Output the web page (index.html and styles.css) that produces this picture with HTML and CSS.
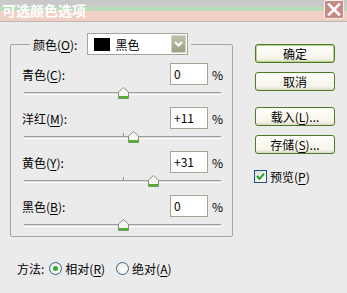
FILE: index.html
```
<!DOCTYPE html>
<html>
<head>
    <meta charset="utf-8"/>
    <title>可选颜色选项</title>
    <link rel="stylesheet" href="styles.css">
</head>
<body>

<div class="window">
    <div class="titlebar">
        <span class="title">可选颜色选项</span>
        <span class="close">
            <svg width="20" height="19" viewBox="0 0 20 19">
                <path d="M5 4.5 L15 14.5 M15 4.5 L5 14.5" stroke="#fff" stroke-width="2.6" stroke-linecap="square"/>
            </svg>
        </span>
    </div>

    <div class="content">
        <div class="left">
            <fieldset class="group">
                <legend class="legend">
                    <span class="legend-label">颜色(<u>O</u>):</span>
                    <span class="dropdown">
                        <span class="swatch"></span>
                        <span class="dropdown-text">黑色</span>
                        <span class="dropdown-btn">
                            <svg width="15" height="18" viewBox="0 0 15 18">
                                <path d="M4 7 L7.5 10.5 L11 7" fill="none" stroke="#fff" stroke-width="2"/>
                            </svg>
                        </span>
                    </span>
                </legend>

                <div class="row">
                    <span class="row-label">青色(<u>C</u>):</span>
                    <span class="field">0</span>
                    <span class="pct">%</span>
                </div>
                <div class="slider">
                    <div class="track"></div>
                    <div class="thumb" style="left: 50%">
                        <svg width="11" height="12" viewBox="0 0 11 12">
                            <path d="M0.5 11.5 V5 L5.5 0.5 L10.5 5 V11.5 Z" fill="#f6f6f0" stroke="#8a8a80"/>
                            <rect x="1" y="9" width="9" height="2.5" fill="#4eb02e"/>
                        </svg>
                    </div>
                </div>

                <div class="row">
                    <span class="row-label">洋红(<u>M</u>):</span>
                    <span class="field">+11</span>
                    <span class="pct">%</span>
                </div>
                <div class="slider">
                    <div class="track"></div>
                    <div class="tick"></div>
                    <div class="thumb" style="left: 55.5%">
                        <svg width="11" height="12" viewBox="0 0 11 12">
                            <path d="M0.5 11.5 V5 L5.5 0.5 L10.5 5 V11.5 Z" fill="#f6f6f0" stroke="#8a8a80"/>
                            <rect x="1" y="9" width="9" height="2.5" fill="#4eb02e"/>
                        </svg>
                    </div>
                </div>

                <div class="row">
                    <span class="row-label">黄色(<u>Y</u>):</span>
                    <span class="field">+31</span>
                    <span class="pct">%</span>
                </div>
                <div class="slider">
                    <div class="track"></div>
                    <div class="tick"></div>
                    <div class="thumb" style="left: 65.5%">
                        <svg width="11" height="12" viewBox="0 0 11 12">
                            <path d="M0.5 11.5 V5 L5.5 0.5 L10.5 5 V11.5 Z" fill="#f6f6f0" stroke="#8a8a80"/>
                            <rect x="1" y="9" width="9" height="2.5" fill="#4eb02e"/>
                        </svg>
                    </div>
                </div>

                <div class="row">
                    <span class="row-label">黑色(<u>B</u>):</span>
                    <span class="field">0</span>
                    <span class="pct">%</span>
                </div>
                <div class="slider last">
                    <div class="track"></div>
                    <div class="thumb" style="left: 50%">
                        <svg width="11" height="12" viewBox="0 0 11 12">
                            <path d="M0.5 11.5 V5 L5.5 0.5 L10.5 5 V11.5 Z" fill="#f6f6f0" stroke="#8a8a80"/>
                            <rect x="1" y="9" width="9" height="2.5" fill="#4eb02e"/>
                        </svg>
                    </div>
                </div>
            </fieldset>

            <div class="method">
                <span class="method-label">方法:</span>
                <span class="radio checked"><span class="dot"></span></span>
                <span class="radio-text">相对(<u>R</u>)</span>
                <span class="radio"></span>
                <span class="radio-text">绝对(<u>A</u>)</span>
            </div>
        </div>

        <div class="right">
            <div class="button default">确定</div>
            <div class="button">取消</div>
            <div class="button gap">载入(<u>L</u>)...</div>
            <div class="button">存储(<u>S</u>)...</div>
            <div class="check-row">
                <span class="checkbox">
                    <svg width="11" height="11" viewBox="0 0 11 11">
                        <path d="M2 5 L4.5 7.8 L9 2.6" fill="none" stroke="#21a121" stroke-width="2"/>
                    </svg>
                </span>
                <span>预览(<u>P</u>)</span>
            </div>
        </div>
    </div>
</div>

</body>
</html>
```

FILE: styles.css
```
body {
    margin: 0;
    font-family: "Noto Sans CJK SC", "DejaVu Sans", sans-serif;
    font-size: 12px;
    color: #000;
    background: #ebebeb;
}

u {
    text-decoration: underline;
    text-underline-offset: 2px;
}

.window {
    width: 347px;
    height: 293px;
    background: #ebebeb;
    overflow: hidden;
}

.titlebar {
    position: relative;
    height: 22px;
    background: linear-gradient(to bottom,
        #c9c9c9 0, #c9c9c9 7px,
        #b9dcb9 7px, #b9dcb9 11px,
        #f3d3c7 11px, #f0cfc2 21px,
        #b9b9b9 21px, #b9b9b9 22px);
}

.title {
    display: block;
    padding: 1px 0 0 2px;
    font-size: 14px;
    font-weight: bold;
    line-height: 18px;
    color: #fff;
}

.close {
    position: absolute;
    top: 0;
    right: 3px;
    width: 20px;
    height: 19px;
    box-sizing: border-box;
    background: #c78a86;
    border: 1px solid #f4f0ee;
    border-radius: 2px;
}

.close svg {
    display: block;
    margin: -1px 0 0 -1px;
}

.content {
    display: flex;
}

.left {
    width: 223px;
    margin-left: 10px;
    padding-top: 11px;
}

.group {
    margin: 0;
    width: 223px;
    box-sizing: border-box;
    padding: 0 10px 0 11px;
    border: 1px solid #a6a6a0;
    border-radius: 2px;
}

.legend {
    display: flex;
    align-items: center;
    margin-left: 8px;
    padding: 0 3px;
}

.legend-label {
    margin-right: 10px;
}

.dropdown {
    display: flex;
    align-items: center;
    width: 101px;
    height: 22px;
    box-sizing: border-box;
    border: 1px solid #a5a596;
    background: #fff;
}

.swatch {
    width: 16px;
    height: 13px;
    margin-left: 6px;
    background: #000;
}

.dropdown-text {
    flex: 1;
    margin-left: 5px;
}

.dropdown-btn {
    width: 15px;
    height: 18px;
    margin-right: 1px;
    box-sizing: border-box;
    border-radius: 2px;
    background: linear-gradient(to bottom, #c2c2aa, #9d9d84);
    box-shadow: inset 0 0 0 1px #d6d6c6;
}

.dropdown-btn svg {
    display: block;
}

.row {
    display: flex;
    align-items: center;
    height: 22px;
    margin-top: 8px;
}

.legend + .row {
    margin-top: 8px;
}

.slider + .row {
    margin-top: 0;
}

.row-label {
    flex: 1;
}

.field {
    width: 38px;
    height: 22px;
    box-sizing: border-box;
    border: 1px solid #a5a596;
    background: #fff;
    padding-left: 3px;
    line-height: 20px;
}

.pct {
    width: 14px;
    padding-left: 4px;
    box-sizing: border-box;
}

.slider {
    position: relative;
    height: 22px;
    margin-left: 2px;
    width: 197px;
}

.slider.last {
    height: 19px;
}

.track {
    position: absolute;
    left: 0;
    right: 0;
    top: 7px;
    height: 1px;
    background: #dadad6;
    border-top: 1px solid #9e9e9a;
    border-bottom: 1px solid #fff;
}

.tick {
    position: absolute;
    left: 50%;
    top: 4px;
    width: 1px;
    height: 4px;
    background: #8e8e8a;
}

.thumb {
    position: absolute;
    top: 2px;
    margin-left: -5px;
    width: 11px;
    height: 12px;
}

.thumb svg {
    display: block;
}

.method {
    display: flex;
    align-items: center;
    height: 14px;
    margin-top: 24px;
    margin-left: 7px;
}

.method-label {
    margin-right: 5px;
}

.radio {
    width: 13px;
    height: 13px;
    box-sizing: border-box;
    border: 1px solid #3d6287;
    border-radius: 50%;
    background: radial-gradient(circle at 60% 60%, #fff, #e4e4dc);
    display: flex;
    align-items: center;
    justify-content: center;
}

.dot {
    width: 5px;
    height: 5px;
    border-radius: 50%;
    background: #31ad31;
}

.radio-text {
    margin-left: 3px;
    margin-right: 11px;
}

.right {
    display: flex;
    flex-direction: column;
    margin-left: 22px;
    padding-top: 22px;
}

.button {
    width: 80px;
    height: 19px;
    box-sizing: border-box;
    margin-bottom: 9px;
    border: 1px solid #4d7a26;
    border-radius: 3px;
    background: linear-gradient(to bottom, #fffffb, #f6f4ea 80%, #dcd8c6);
    text-align: center;
    line-height: 17px;
}

.button.default {
    box-shadow: inset 0 0 0 1px #b5d48c;
}

.button.gap {
    margin-top: 7px;
}

.check-row {
    display: flex;
    align-items: center;
    margin-top: 5px;
    margin-left: -1px;
}

.checkbox {
    width: 13px;
    height: 13px;
    box-sizing: border-box;
    border: 1px solid #1c5180;
    background: linear-gradient(135deg, #e0e0d8, #fff);
    margin-right: 3px;
}

.checkbox svg {
    display: block;
}
```
